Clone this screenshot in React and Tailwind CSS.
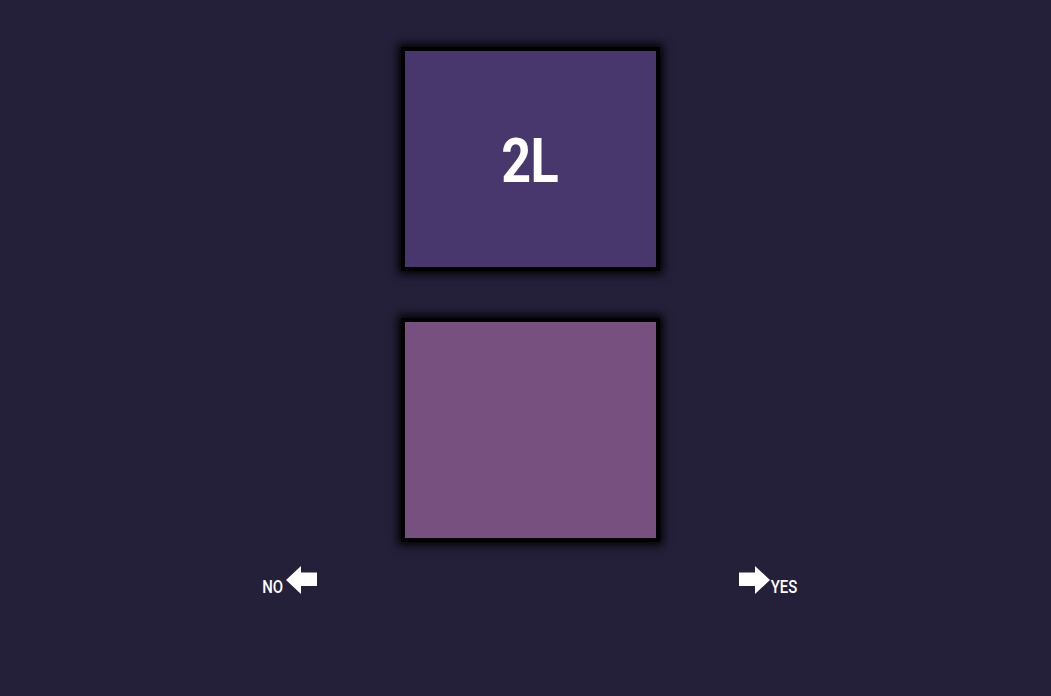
export default function App() {
  const font = { fontFamily: "Roboto, 'Liberation Sans', sans-serif" };
  return (
    <div className="w-full min-h-[696px] bg-[#24203a] flex flex-col items-center pl-[9px] pt-[47px]" style={font}>
      <div className="w-[259px] h-[224px] bg-[#47376c] border-[4px] border-black shadow-[0_0_9px_3px_#000] flex items-center justify-center">
        <span className="text-white font-bold text-[62px] leading-none scale-x-[0.84] tracking-[-1px] pt-[3px]">2L</span>
      </div>
      <div className="mt-[47px] w-[259px] h-[224px] bg-[#785080] border-[4px] border-black shadow-[0_0_9px_3px_#000]" />
      <div className="mt-[24px] w-[540px] flex justify-between items-end">
        <div className="flex items-end">
          <span className="text-white font-medium text-[18px] leading-none scale-x-[0.83] mr-[-2px] mb-[-2px]">NO</span>
          <svg width="31" height="28" viewBox="0 0 31 28" className="ml-[3px]">
            <polygon points="0,14 15,0 15,6.5 31,6.5 31,20 15,20 15,28" fill="#fff" />
          </svg>
        </div>
        <div className="flex items-end">
          <svg width="31" height="28" viewBox="0 0 31 28">
            <polygon points="31,14 16,0 16,6.5 0,6.5 0,20 16,20 16,28" fill="#fff" />
          </svg>
          <span className="text-white font-medium text-[18px] leading-none scale-x-[0.83] ml-[-2px] mb-[-2px]">YES</span>
        </div>
      </div>
    </div>
  );
}
